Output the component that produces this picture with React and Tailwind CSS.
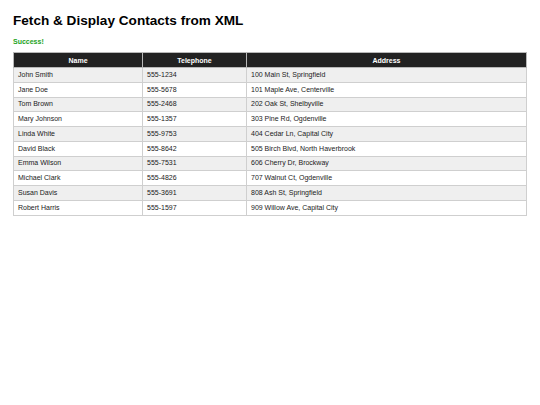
import { useState } from "react";

const contacts = [
  { name: "John Smith", phone: "555-1234", address: "100 Main St, Springfield" },
  { name: "Jane Doe", phone: "555-5678", address: "101 Maple Ave, Centerville" },
  { name: "Tom Brown", phone: "555-2468", address: "202 Oak St, Shelbyville" },
  { name: "Mary Johnson", phone: "555-1357", address: "303 Pine Rd, Ogdenville" },
  { name: "Linda White", phone: "555-9753", address: "404 Cedar Ln, Capital City" },
  { name: "David Black", phone: "555-8642", address: "505 Birch Blvd, North Haverbrook" },
  { name: "Emma Wilson", phone: "555-7531", address: "606 Cherry Dr, Brockway" },
  { name: "Michael Clark", phone: "555-4826", address: "707 Walnut Ct, Ogdenville" },
  { name: "Susan Davis", phone: "555-3691", address: "808 Ash St, Springfield" },
  { name: "Robert Harris", phone: "555-1597", address: "909 Willow Ave, Capital City" },
];

export default function App() {
  const [status] = useState("Success!");

  return (
    <div className="w-[540px] h-[405px] bg-white px-[13px] pt-[13px] font-['Liberation_Sans',Arial,sans-serif] text-black">
      <h1 className="text-[13.6px] leading-[16px] font-bold">Fetch &amp; Display Contacts from XML</h1>
      <p className="mt-[8px] text-[7px] leading-[9px] font-bold text-[#22a322]">{status}</p>
      <table className="mt-[6px] w-full border-collapse border border-[#b8b8b8] text-[7px]">
        <thead>
          <tr className="h-[15px] bg-[#222222] text-white">
            <th className="w-[129px] border border-[#b8b8b8] p-0 leading-[9px] font-bold">Name</th>
            <th className="w-[104px] border border-[#b8b8b8] p-0 leading-[9px] font-bold">Telephone</th>
            <th className="border border-[#b8b8b8] p-0 leading-[9px] font-bold">Address</th>
          </tr>
        </thead>
        <tbody>
          {contacts.map((c, i) => (
            <tr key={c.name} className={`h-[14.75px] ${i % 2 === 0 ? "bg-[#efefef]" : "bg-white"}`}>
              <td className="border border-[#cfcfcf] px-[4px] py-0 leading-[8px] text-[#1a1a1a]">{c.name}</td>
              <td className="border border-[#cfcfcf] px-[4px] py-0 leading-[8px] text-[#1a1a1a]">{c.phone}</td>
              <td className="border border-[#cfcfcf] px-[4px] py-0 leading-[8px] text-[#1a1a1a]">{c.address}</td>
            </tr>
          ))}
        </tbody>
      </table>
    </div>
  );
}
